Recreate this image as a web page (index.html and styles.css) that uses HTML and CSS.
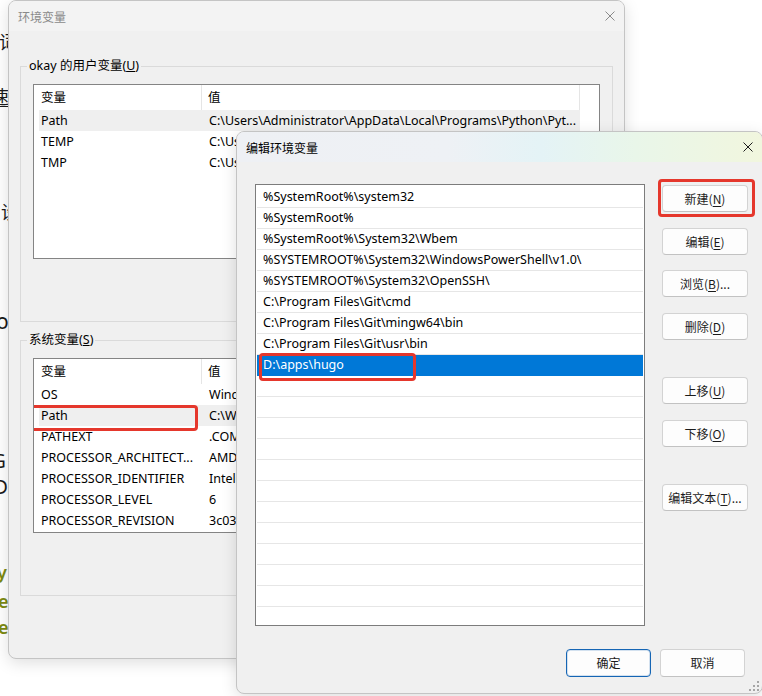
FILE: index.html
```html
<!DOCTYPE html>
<html lang="zh-CN">
<head>
<meta charset="utf-8">
<title>环境变量</title>
<link rel="stylesheet" href="styles.css">
</head>
<body>
<div class="page">
  <div class="frag f1">词</div>
  <div class="frag f2"><span class="link">速</span></div>
  <div class="frag f3">设</div>
  <div class="frag f4">o</div>
  <div class="frag f5">G</div>
  <div class="frag f6">D</div>
  <div class="frag f7 green">y .</div>
  <div class="frag f8 green">er</div>
  <div class="frag f9 green">er</div>
</div>

<section class="win win-env">
  <header class="titlebar inactive">
    <span class="title">环境变量</span>
    <svg class="close" viewBox="0 0 10 10" width="10" height="10"><path d="M0.5 0.5L9.5 9.5M9.5 0.5L0.5 9.5" stroke="currentColor" stroke-width="1" fill="none"/></svg>
  </header>
  <div class="env-body">
    <fieldset class="group">
      <legend>okay 的用户变量(<u>U</u>)</legend>
      <div class="lv">
        <div class="lv-head"><div class="c1">变量</div><div class="c2">值</div></div>
        <div class="lv-row sel"><div class="c1">Path</div><div class="c2">C:\Users\Administrator\AppData\Local\Programs\Python\Pyt...</div></div>
        <div class="lv-row"><div class="c1">TEMP</div><div class="c2">C:\Users\Administrator\AppData\Local\Temp</div></div>
        <div class="lv-row"><div class="c1">TMP</div><div class="c2">C:\Users\Administrator\AppData\Local\Temp</div></div>
      </div>
    </fieldset>
    <fieldset class="group sys">
      <legend>系统变量(<u>S</u>)</legend>
      <div class="lv">
        <div class="lv-head"><div class="c1">变量</div><div class="c2">值</div></div>
        <div class="lv-row"><div class="c1">OS</div><div class="c2">Windows_NT</div></div>
        <div class="lv-row sel marked"><div class="c1">Path</div><div class="c2">C:\WINDOWS\system32;C:\WINDOWS;C:\WINDOWS\System32\Wbem</div><span class="mark mark-path"></span></div>
        <div class="lv-row"><div class="c1">PATHEXT</div><div class="c2">.COM;.EXE;.BAT;.CMD;.VBS;.VBE;.JS;.JSE;.WSF;.WSH;.MSC</div></div>
        <div class="lv-row"><div class="c1">PROCESSOR_ARCHITECT...</div><div class="c2">AMD64</div></div>
        <div class="lv-row"><div class="c1">PROCESSOR_IDENTIFIER</div><div class="c2">Intel64 Family 6 Model 60 Stepping 3, GenuineIntel</div></div>
        <div class="lv-row"><div class="c1">PROCESSOR_LEVEL</div><div class="c2">6</div></div>
        <div class="lv-row"><div class="c1">PROCESSOR_REVISION</div><div class="c2">3c03</div></div>
      </div>
    </fieldset>
  </div>
</section>

<section class="win win-edit">
  <header class="titlebar active">
    <span class="title">编辑环境变量</span>
    <svg class="close" viewBox="0 0 10 10" width="10" height="10"><path d="M0.5 0.5L9.5 9.5M9.5 0.5L0.5 9.5" stroke="currentColor" stroke-width="1" fill="none"/></svg>
  </header>
  <div class="edit-body">
    <div class="edit-main">
      <div class="listbox">
        <div class="lb-row">%SystemRoot%\system32</div>
        <div class="lb-row">%SystemRoot%</div>
        <div class="lb-row">%SystemRoot%\System32\Wbem</div>
        <div class="lb-row">%SYSTEMROOT%\System32\WindowsPowerShell\v1.0\</div>
        <div class="lb-row">%SYSTEMROOT%\System32\OpenSSH\</div>
        <div class="lb-row">C:\Program Files\Git\cmd</div>
        <div class="lb-row">C:\Program Files\Git\mingw64\bin</div>
        <div class="lb-row">C:\Program Files\Git\usr\bin</div>
        <div class="lb-row sel">D:\apps\hugo<span class="mark mark-hugo"></span></div>
        <div class="lb-row"></div>
        <div class="lb-row"></div>
        <div class="lb-row"></div>
        <div class="lb-row"></div>
        <div class="lb-row"></div>
        <div class="lb-row"></div>
        <div class="lb-row"></div>
        <div class="lb-row"></div>
        <div class="lb-row"></div>
        <div class="lb-row"></div>
        <div class="lb-row"></div>
        <div class="lb-row"></div>
      </div>
      <div class="btn-col">
        <div class="btn-wrap"><button class="btn">新建(<u>N</u>)</button><span class="mark mark-new"></span></div>
        <button class="btn g16">编辑(<u>E</u>)</button>
        <button class="btn g15">浏览(<u>B</u>)...</button>
        <button class="btn g16">删除(<u>D</u>)</button>
        <button class="btn g37">上移(<u>U</u>)</button>
        <button class="btn g16">下移(<u>O</u>)</button>
        <button class="btn g37">编辑文本(<u>T</u>)...</button>
      </div>
    </div>
    <div class="edit-foot">
      <button class="btn btn-foot primary">确定</button>
      <button class="btn btn-foot">取消</button>
    </div>
  </div>
  <svg class="grip" viewBox="0 0 10 10" width="10" height="10">
    <rect x="8" y="0" width="2" height="2"/>
    <rect x="4" y="4" width="2" height="2"/><rect x="8" y="4" width="2" height="2"/>
    <rect x="0" y="8" width="2" height="2"/><rect x="4" y="8" width="2" height="2"/><rect x="8" y="8" width="2" height="2"/>
  </svg>
</section>
</body>
</html>
```
FILE: styles.css
```css
* { box-sizing: border-box; }
html, body { margin: 0; }
body {
  width: 762px;
  height: 696px;
  overflow: hidden;
  position: relative;
  background: #ffffff;
  font-family: "Noto Sans", "Noto Sans CJK SC", sans-serif;
  font-size: 12.5px;
  color: #000;
}

/* background page fragments */
.page { padding-top: 31px; font-family: "Noto Sans CJK SC", sans-serif; color: #1a1a1a; }
.frag { height: 20px; line-height: 20px; white-space: nowrap; font-size: 18px; }
.f1 { margin-left: -1px; }
.f2 { margin-top: 35px; margin-left: -9px; }
.f2 .link { text-decoration: underline; text-underline-offset: 2px; }
.f3 { margin-top: 95px; margin-left: 1px; }
.f4 { margin-top: 90px; margin-left: -4px; font-family: "Noto Sans", sans-serif; font-size: 21px; }
.f5 { margin-top: 120px; margin-left: -8px; font-family: "Noto Sans", sans-serif; font-size: 19px; }
.f6 { margin-top: 6px; margin-left: -6px; font-family: "Noto Sans", sans-serif; font-size: 19px; }
.green { color: #7c8a12; font-family: "Noto Sans", sans-serif; font-weight: 600; font-size: 18px; }
.f7 { margin-top: 65px; margin-left: -3px; }
.f8 { margin-top: 9px; margin-left: -2px; }
.f9 { margin-top: 6px; margin-left: -2px; }

/* windows */
.win {
  position: absolute;
  background: #f0f0f0;
  border: 1px solid #c4c4c4;
  border-radius: 8px;
  overflow: hidden;
  box-shadow: 0 4px 16px rgba(0, 0, 0, 0.13);
}
.win-env { left: 8px; top: 0; width: 617px; height: 659px; }
.win-edit { left: 236px; top: 131px; width: 527px; height: 563px; }

.titlebar {
  height: 30px;
  display: flex;
  align-items: center;
  justify-content: space-between;
  padding: 0 9px 0 9px;
  font-family: "Noto Sans CJK SC", sans-serif;
  font-size: 12px;
}
.titlebar.inactive { background: #f3f3f3; color: #8a8a8a; }
.titlebar.active {
  background: linear-gradient(90deg, #eef0f4 0%, #eef1f5 40%, #e4f3f6 58%, #e9f6e9 76%, #f1f6de 100%);
  color: #000;
}
.titlebar.active .close { color: #1c1c1c; }
.close { display: block; }

/* env dialog */
.env-body { padding: 27px 11px 0 11px; }
.group {
  margin: 0;
  min-width: 0;
  border: 1px solid #dadada;
  padding: 10px 12px 62px 12px;
}
.group.sys { margin-top: 10px; }
.group legend {
  padding: 0 2px;
  margin-left: -6px;
  line-height: 16px;
  font-size: 12.5px;
  color: #000;
}
.lv {
  height: 175px;
  background: #fff;
  border: 1px solid #848484;
  overflow: hidden;
}
.lv-head { display: flex; height: 25px; line-height: 25px; }
.lv-head .c1 { width: 168px; padding-left: 7px; border-right: 1px solid #e5e5e5; }
.lv-head .c2 { width: 378px; padding-left: 6px; border-right: 1px solid #e5e5e5; }
.lv-row {
  display: flex;
  position: relative;
  margin-left: 5px;
  width: 541px;
  height: 21px;
  line-height: 21px;
  white-space: nowrap;
}
.lv-row.sel { background: #efefef; }
.lv-row .c1 { width: 163px; padding-left: 2px; overflow: hidden; flex-shrink: 0; }
.lv-row .c2 { flex: 1; padding-left: 7px; overflow: hidden; }

/* annotation boxes */
.mark {
  position: absolute;
  border: 3px solid #e5372c;
  border-radius: 4px;
  pointer-events: none;
}
.mark-path { left: -10px; top: 0; width: 169px; height: 26px; }
.mark-hugo { left: 2px; top: -2px; width: 157px; height: 28px; }
.mark-new { left: -4px; top: -6px; right: -7px; bottom: -5px; }

/* edit dialog */
.edit-body { display: flex; flex-direction: column; padding: 22px 17px 0 18px; }
.edit-main { display: flex; }
.listbox {
  flex-shrink: 0;
  width: 390px;
  height: 442px;
  background: #fff;
  border: 1px solid #7c7c7c;
  padding-top: 2px;
  overflow: hidden;
}
.lb-row {
  position: relative;
  height: 21px;
  line-height: 20px;
  margin: 0 1px;
  padding-left: 6px;
  border-bottom: 1px solid #e6e6e6;
  white-space: nowrap;
}
.lb-row.sel { background: #0078d7; color: #fff; border-bottom-color: #0078d7; }

.btn-col {
  flex-shrink: 0;
  display: flex;
  flex-direction: column;
  width: 86px;
  margin-left: 17px;
  padding-top: 1px;
}
.btn-wrap { position: relative; }
.btn {
  display: block;
  width: 86px;
  height: 27px;
  padding: 0;
  background: #fdfdfd;
  border: 1px solid #d3d3d3;
  border-bottom-color: #c2c2c2;
  border-radius: 4px;
  font-family: "Noto Sans CJK SC", sans-serif;
  font-size: 12px;
  line-height: 24px;
  color: #1b1b1b;
}
.btn u { text-underline-offset: 2px; }
.g16 { margin-top: 16px; }
.g15 { margin-top: 15px; }
.g37 { margin-top: 37px; }

.edit-foot { display: flex; justify-content: flex-end; gap: 9px; margin-top: 23px; }
.btn-foot { width: 85px; height: 28px; }
.btn-foot.primary { border: 1px solid #1565b4; box-shadow: inset 0 0 0 1px rgba(21, 101, 180, 0.18); }

.grip { position: absolute; right: 3px; bottom: 2px; fill: #a6a6a6; }
```
